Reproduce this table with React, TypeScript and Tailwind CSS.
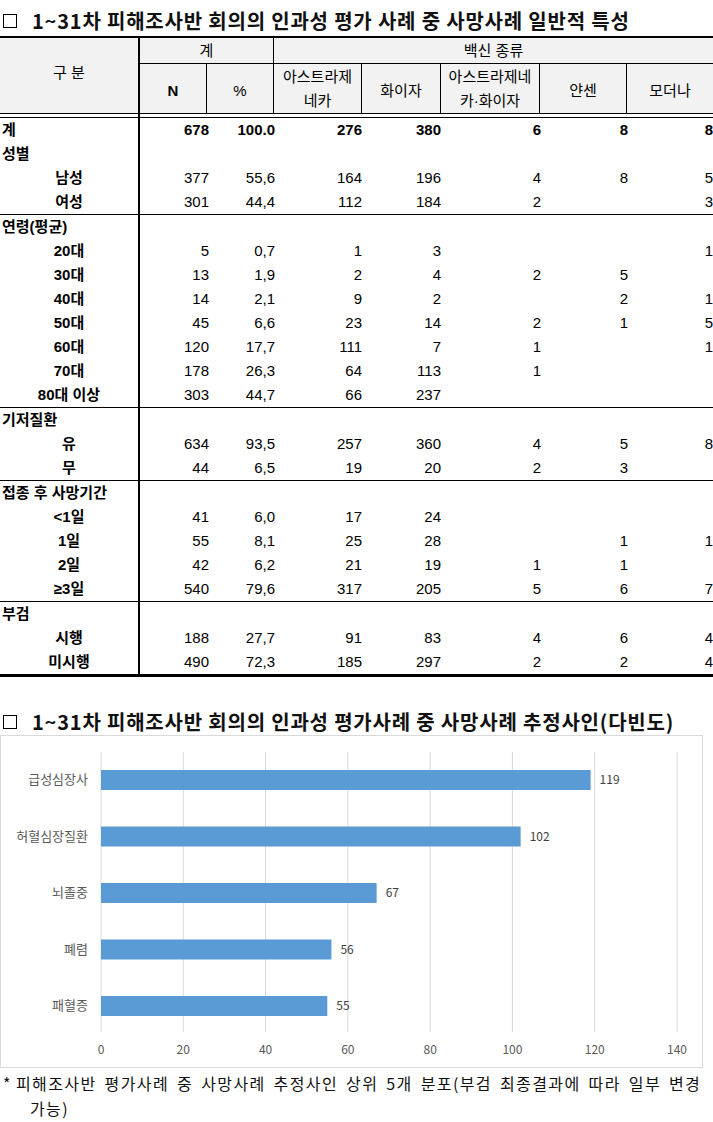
const vaccines = ['아스트라제네카', '화이자', '아스트라제네카·화이자', '얀센', '모더나']

type Row = { label: string; values?: string[]; bold?: boolean }

const sections: Row[][] = [
  [
    { label: '계', values: ['678', '100.0', '276', '380', '6', '8', '8'], bold: true },
    { label: '성별' },
    { label: '남성', values: ['377', '55,6', '164', '196', '4', '8', '5'] },
    { label: '여성', values: ['301', '44,4', '112', '184', '2', '', '3'] },
  ],
  [
    { label: '연령(평균)' },
    { label: '20대', values: ['5', '0,7', '1', '3', '', '', '1'] },
    { label: '30대', values: ['13', '1,9', '2', '4', '2', '5', ''] },
    { label: '40대', values: ['14', '2,1', '9', '2', '', '2', '1'] },
    { label: '50대', values: ['45', '6,6', '23', '14', '2', '1', '5'] },
    { label: '60대', values: ['120', '17,7', '111', '7', '1', '', '1'] },
    { label: '70대', values: ['178', '26,3', '64', '113', '1', '', ''] },
    { label: '80대 이상', values: ['303', '44,7', '66', '237', '', '', ''] },
  ],
  [
    { label: '기저질환' },
    { label: '유', values: ['634', '93,5', '257', '360', '4', '5', '8'] },
    { label: '무', values: ['44', '6,5', '19', '20', '2', '3', ''] },
  ],
  [
    { label: '접종 후 사망기간' },
    { label: '<1일', values: ['41', '6,0', '17', '24', '', '', ''] },
    { label: '1일', values: ['55', '8,1', '25', '28', '', '1', '1'] },
    { label: '2일', values: ['42', '6,2', '21', '19', '1', '1', ''] },
    { label: '≥3일', values: ['540', '79,6', '317', '205', '5', '6', '7'] },
  ],
  [
    { label: '부검' },
    { label: '시행', values: ['188', '27,7', '91', '83', '4', '6', '4'] },
    { label: '미시행', values: ['490', '72,3', '185', '297', '2', '2', '4'] },
  ],
]

const causes = [
  { name: '급성심장사', value: 119 },
  { name: '허혈심장질환', value: 102 },
  { name: '뇌졸중', value: 67 },
  { name: '폐렴', value: 56 },
  { name: '패혈증', value: 55 },
]

function Title({ children }: { children: string }) {
  return (
    <div className="flex items-center h-[26px] font-['Noto_Sans_CJK_KR',sans-serif] font-bold text-[20px] tracking-[0.8px] text-[#111] whitespace-nowrap">
      <span className="w-[14px] h-[14px] border-[1.5px] border-black ml-[3px] mr-[15px] shrink-0" />
      {children}
    </div>
  )
}

function DataRow({ row }: { row: Row }) {
  // the total row keeps its label on the left like a section heading
  const centered = row.values && !row.bold
  return (
    <div className="grid grid-cols-[140px_69px_66px_87px_79px_100px_87px_85px] h-[24px] items-center">
      <div
        className={`h-full flex items-center border-r-2 border-black font-bold ${
          centered ? 'justify-center' : 'pl-[2px]'
        }`}
      >
        {row.label}
      </div>
      {(row.values ?? []).map((v, i) => (
        <div key={i} className={`text-right ${row.bold ? 'font-bold' : ''}`}>
          {v}
        </div>
      ))}
    </div>
  )
}

function CauseChart() {
  const x0 = 100
  const scale = 576 / 140
  return (
    <div className="border border-[#d9d9d9] w-[703px] h-[333px]">
      <svg width="701" height="331" className="block font-['Noto_Sans_CJK_KR',sans-serif]">
        {[0, 20, 40, 60, 80, 100, 120, 140].map((t) => (
          <g key={t}>
            <line x1={x0 + t * scale} x2={x0 + t * scale} y1={16} y2={296} stroke="#d9d9d9" strokeWidth={1} />
            <text x={x0 + t * scale} y={318} textAnchor="middle" fontSize={12} fill="#595959">
              {t}
            </text>
          </g>
        ))}
        {causes.map((c, i) => {
          const y = 34 + i * 56.5
          const w = c.value * scale
          return (
            <g key={c.name}>
              <text x={87} y={y + 14} textAnchor="end" fontSize={13} fill="#595959">
                {c.name}
              </text>
              <rect x={x0} y={y} width={w} height={20} fill="#5b9bd5" />
              <text x={x0 + w + 9} y={y + 14} fontSize={12} fill="#404040">
                {c.value}
              </text>
            </g>
          )
        })}
      </svg>
    </div>
  )
}

export default function App() {
  return (
    <div className="w-[713px] overflow-hidden bg-white text-black">
      <div className="pt-[8px] pb-[2px]">
        <Title>1~31차 피해조사반 회의의 인과성 평가 사례 중 사망사례 일반적 특성</Title>
      </div>

      <div className="font-['Liberation_Sans','Noto_Sans_CJK_KR',sans-serif] text-[15px] leading-[24px]">
        {/* header */}
        <div className="flex border-t-2 border-black bg-[#f2f2f2] h-[77px]">
          <div className="w-[140px] border-r-2 border-black flex items-center justify-center pb-[6px]">구 분</div>
          <div className="flex-1 flex flex-col">
            <div className="flex h-[26px] border-b border-black">
              <div className="w-[134px] border-r border-black flex items-center justify-center">계</div>
              <div className="flex-1 flex items-center justify-center">백신 종류</div>
            </div>
            <div className="flex flex-1">
              <div className="w-[67px] border-r border-black flex items-center justify-center font-bold pt-[4px]">N</div>
              <div className="w-[67px] border-r border-black flex items-center justify-center pt-[4px]">%</div>
              <div className="w-[88px] border-r border-black flex items-center justify-center text-center">
                아스트라제
                <br />
                네카
              </div>
              <div className="w-[79px] border-r border-black flex items-center justify-center pt-[4px]">{vaccines[1]}</div>
              <div className="w-[99px] border-r border-black flex items-center justify-center text-center">
                아스트라제네
                <br />
                카·화이자
              </div>
              <div className="w-[87px] border-r border-black flex items-center justify-center pt-[4px]">{vaccines[3]}</div>
              <div className="flex-1 flex items-center justify-center pt-[4px]">{vaccines[4]}</div>
            </div>
          </div>
        </div>
        <div className="flex h-[5px] border-y border-black">
          <div className="w-[140px] border-r-2 border-black" />
        </div>

        {/* body */}
        {sections.map((rows, si) => (
          <div
            key={si}
            className={si === sections.length - 1 ? 'border-b-[3px] border-black' : 'border-b border-black'}
          >
            {rows.map((r) => (
              <DataRow key={r.label} row={r} />
            ))}
          </div>
        ))}
      </div>

      <div className="mt-[32px]">
        <Title>1~31차 피해조사반 회의의 인과성 평가사례 중 사망사례 추정사인(다빈도)</Title>
      </div>

      <CauseChart />

      <div className="mt-[3px] font-['Noto_Sans_CJK_KR',sans-serif] text-[16px] leading-[25px] text-[#111] tracking-[1.4px] [word-spacing:3px]">
        <div className="flex whitespace-nowrap">
          <span className="w-[16px] pl-[3px] shrink-0">*</span>
          <span>피해조사반 평가사례 중 사망사례 추정사인 상위 5개 분포(부검 최종결과에 따라 일부 변경</span>
        </div>
        <div className="pl-[30px]">가능)</div>
      </div>
    </div>
  )
}
